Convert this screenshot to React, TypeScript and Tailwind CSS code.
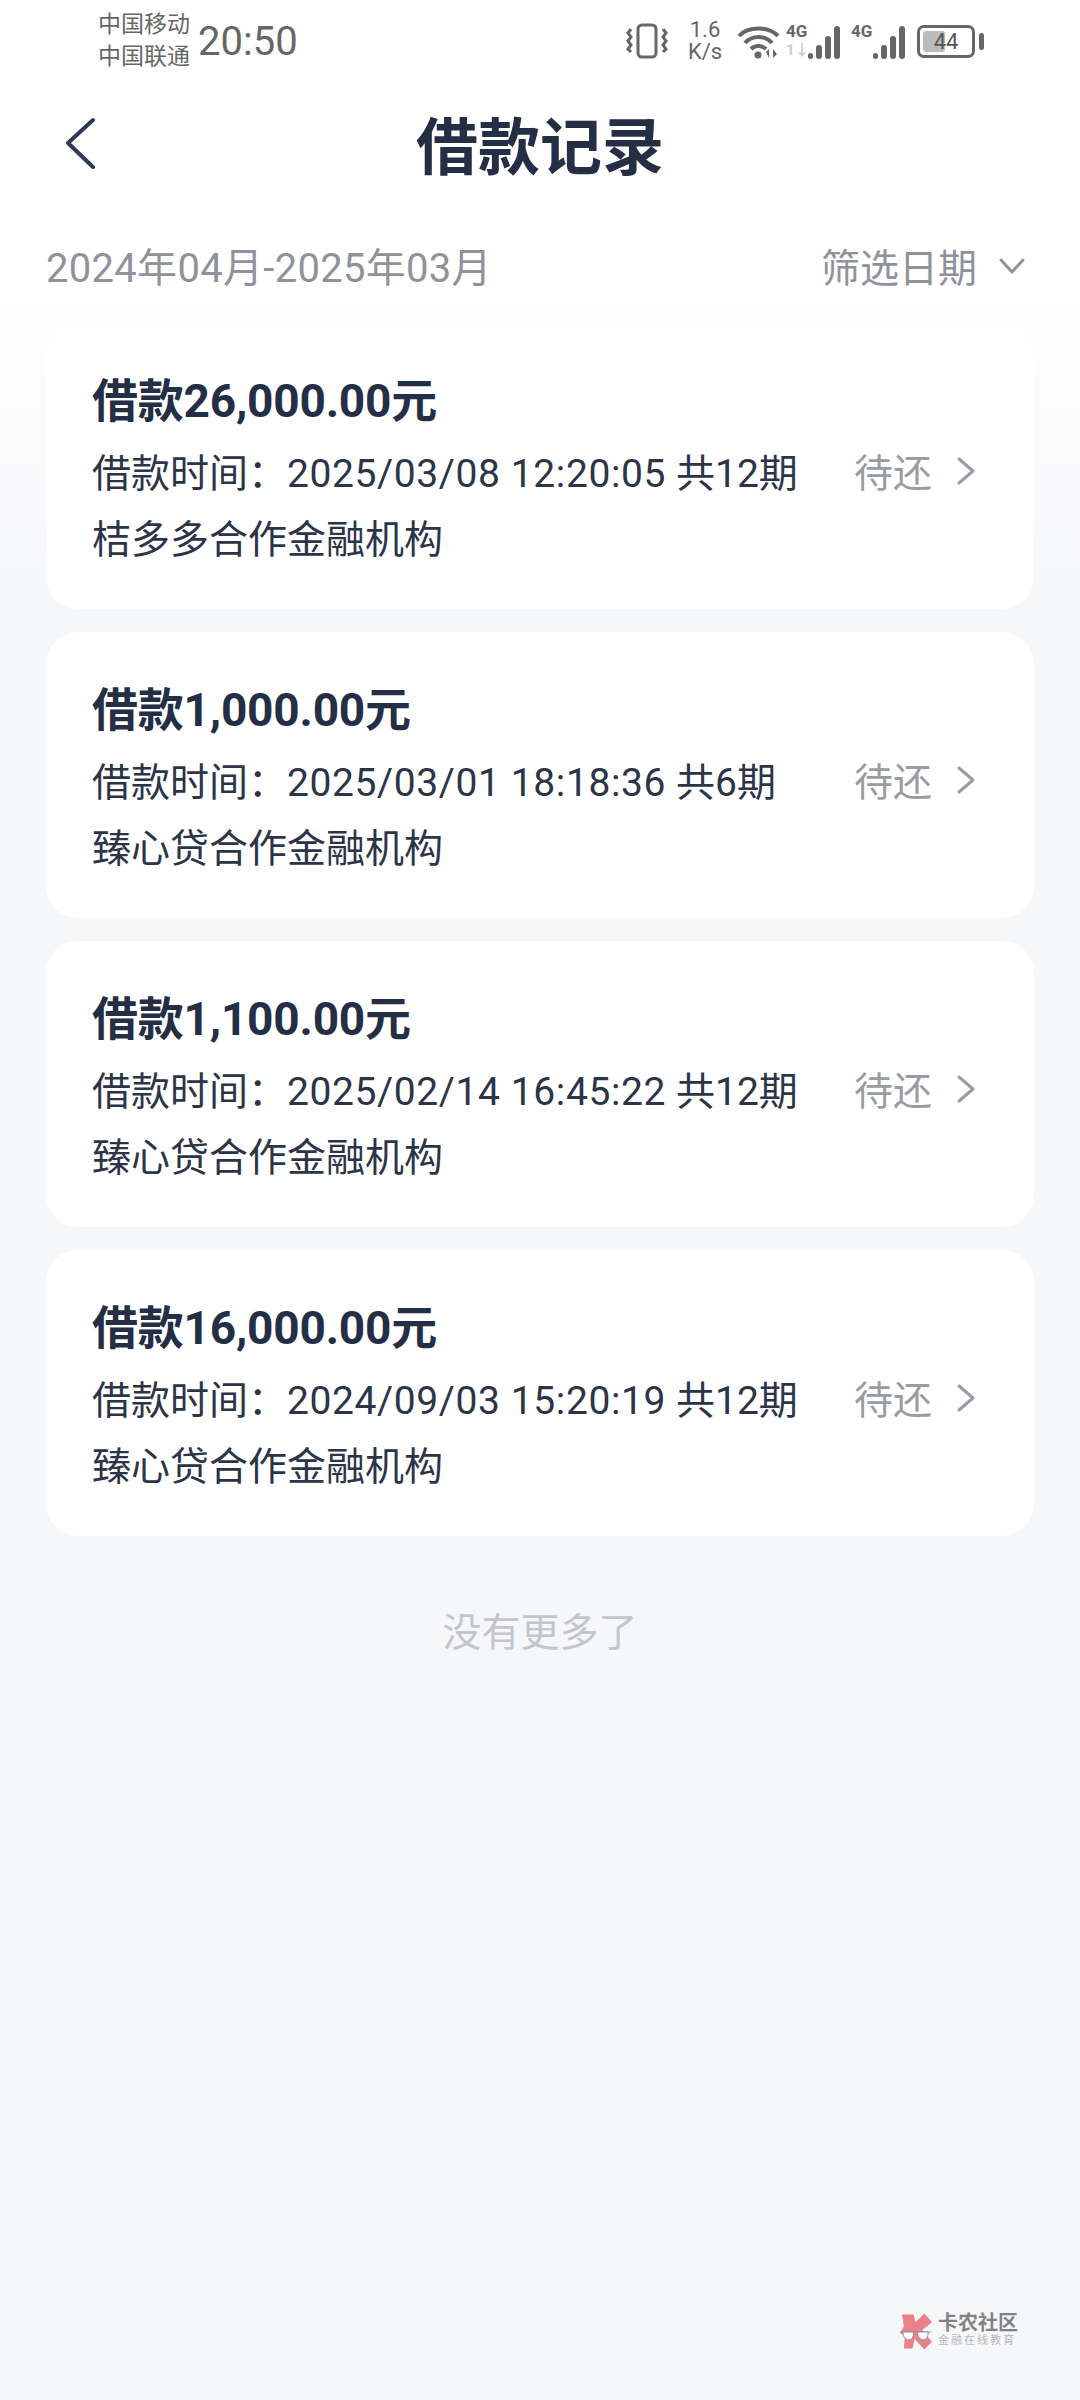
const loans = [
  { amount: "借款26,000.00元", time: "2025/03/08 12:20:05", term: "共12期", org: "桔多多合作金融机构" },
  { amount: "借款1,000.00元", time: "2025/03/01 18:18:36", term: "共6期", org: "臻心贷合作金融机构" },
  { amount: "借款1,100.00元", time: "2025/02/14 16:45:22", term: "共12期", org: "臻心贷合作金融机构" },
  { amount: "借款16,000.00元", time: "2024/09/03 15:20:19", term: "共12期", org: "臻心贷合作金融机构" },
];

function Signal({ mute }: { mute?: boolean }) {
  return (
    <div className="relative w-[54px] h-[36px]">
      <span className="absolute left-0 top-[0px] text-[17px] leading-none font-bold text-[#666]">4G</span>
      {mute && <span className="absolute left-0 top-[20px] text-[15px] leading-none font-bold text-[#ccc]">1↓</span>}
      <div className="absolute right-0 bottom-0 flex items-end gap-[3px]">
        <div className="w-[5px] h-[6px] rounded-full bg-[#666]" />
        <div className="w-[6px] h-[14px] rounded-full bg-[#666]" />
        <div className="w-[6px] h-[23px] rounded-full bg-[#666]" />
        <div className="w-[6px] h-[33px] rounded-full bg-[#666]" />
      </div>
    </div>
  );
}

function StatusBar() {
  return (
    <div className="h-[80px] flex items-center pl-[98px] pr-[96px] text-[#666]">
      <div className="w-[100px] text-[23px] leading-[32px] pt-[2px]">
        <div>中国移动</div>
        <div>中国联通</div>
      </div>
      <div className="text-[40px] leading-none pt-[4px]">20:50</div>
      <div className="ml-auto flex items-center pt-[2px]">
        <svg className="ml-[3px]" width="42" height="36" viewBox="0 0 42 36" fill="none" stroke="#666" strokeWidth="3">
          <rect x="12" y="2" width="18" height="32" rx="4" />
          <path d="M5 6l-3 4 3 4-3 4 3 4-3 4 3 3M37 6l3 4-3 4 3 4-3 4 3 4-3 3" />
        </svg>
        <div className="w-[40px] ml-[17px] text-[22px] leading-[22px] text-center">
          <div>1.6</div>
          <div>K/s</div>
        </div>
        <svg className="ml-[12px]" width="43" height="36" viewBox="0 0 43 36" fill="none">
          <path d="M2 13C11 3 32 3 41 13M8 20C15 12 28 12 35 20M14 26C18 22 25 22 29 26" stroke="#666" strokeWidth="4" />
          <circle cx="21" cy="32" r="3.5" fill="#666" />
          <path d="M29 29l3-3v9M36 26v9l4-4z" fill="#666" />
        </svg>
        <div className="ml-[6px]">
          <Signal mute />
        </div>
        <div className="ml-[11px]">
          <Signal />
        </div>
        <div className="ml-[12px] flex items-center">
          <div className="relative w-[58px] h-[33px] rounded-[7px] border-[3px] border-[#666]">
            <div className="absolute left-[3px] top-[3px] bottom-[3px] w-[22px] rounded-[3px] bg-[#bbb]" />
            <div className="absolute inset-0 text-center text-[22px] leading-[27px] text-[#555]">44</div>
          </div>
          <div className="ml-[4px] w-[5px] h-[17px] rounded-full bg-[#666]" />
        </div>
      </div>
    </div>
  );
}

function LoanCard({ amount, time, term, org }: (typeof loans)[number]) {
  return (
    <div className="h-[286px] rounded-[32px] bg-white pl-[46px] pr-[58px] pt-[46px]">
      <div className="text-[46px] leading-[64px] font-bold text-[#242e45] tracking-[-0.2px]">{amount}</div>
      <div className="mt-[11px] flex items-center h-[60px] text-[39px] text-[#2c3448]">
        <span>借款时间：</span>
        <span className="tracking-[0.6px]">{time}</span>
        <span className="ml-[10px]">{term}</span>
        <span className="ml-auto text-[#9a9ca3]">待还</span>
        <svg className="ml-[24px] -mt-[6px]" width="20" height="30" viewBox="0 0 20 30" fill="none" stroke="#9a9ca3" strokeWidth="3" strokeLinecap="round" strokeLinejoin="round">
          <path d="M3 3l14 12L3 27" />
        </svg>
      </div>
      <div className="mt-[6px] text-[39px] leading-[60px] text-[#2c3448]">{org}</div>
    </div>
  );
}

function Watermark() {
  return (
    <div className="absolute right-[62px] bottom-[50px] flex items-center opacity-80">
      <svg width="33" height="38" viewBox="0 0 34 38">
        <path d="M2 2h12l2 8 9-9 8 9-10 8 10 12-8 8-10-11-2 10H4l1-13-5-3 4-7z" fill="#e8656f" />
        <path d="M0 20h32" stroke="#777" strokeWidth="1" />
        <path d="M3 20h11c0 6-2 8-5 8s-6-3-6-8zM18 20h11c0 6-2 8-5 8s-6-3-6-8z" fill="#fff" stroke="#777" strokeWidth="1" />
      </svg>
      <div className="ml-[5px]">
        <div className="text-[20px] leading-[20px] font-bold text-[#666]">卡农社区</div>
        <div className="text-[11px] leading-[16px] tracking-[2px] text-[#aaa]">金融在线教育</div>
      </div>
    </div>
  );
}

export default function App() {
  return (
    <main
      className="relative h-[2400px] w-[1080px] overflow-hidden bg-[linear-gradient(#fff_0,#fff_300px,#f6f7f9_580px)]"
      style={{ fontFamily: 'Roboto, "Noto Sans CJK SC", sans-serif' }}
    >
      <StatusBar />
      <div className="relative h-[76px] mt-[30px] flex items-center justify-center">
        <svg className="absolute left-[64px] top-[7px]" width="32" height="52" viewBox="0 0 32 52" fill="none" stroke="#2f3b52" strokeWidth="4" strokeLinecap="round" strokeLinejoin="round">
          <path d="M29 3L4 26l25 24" />
        </svg>
        <h1 className="text-[62px] font-bold text-[#242e45]">借款记录</h1>
      </div>
      <div className="mt-[53px] h-[60px] px-[46px] flex items-center justify-between text-[#8f929b]">
        <span className="text-[40px] tracking-[0.3px]">2024年04月-2025年03月</span>
        <span className="flex items-center text-[39px]">
          筛选日期
          <svg className="ml-[22px] mr-[9px] -mt-[6px]" width="26" height="16" viewBox="0 0 26 16" fill="none" stroke="#8f929b" strokeWidth="3" strokeLinecap="round" strokeLinejoin="round">
            <path d="M2 2l11 12L24 2" />
          </svg>
        </span>
      </div>
      <div className="mt-[24px] px-[46px] flex flex-col gap-[23px]">
        {loans.map((l) => (
          <LoanCard key={l.time} {...l} />
        ))}
      </div>
      <div className="mt-[67px] text-center text-[39px] leading-[60px] text-[#c4c6cb]">没有更多了</div>
      <Watermark />
    </main>
  );
}
